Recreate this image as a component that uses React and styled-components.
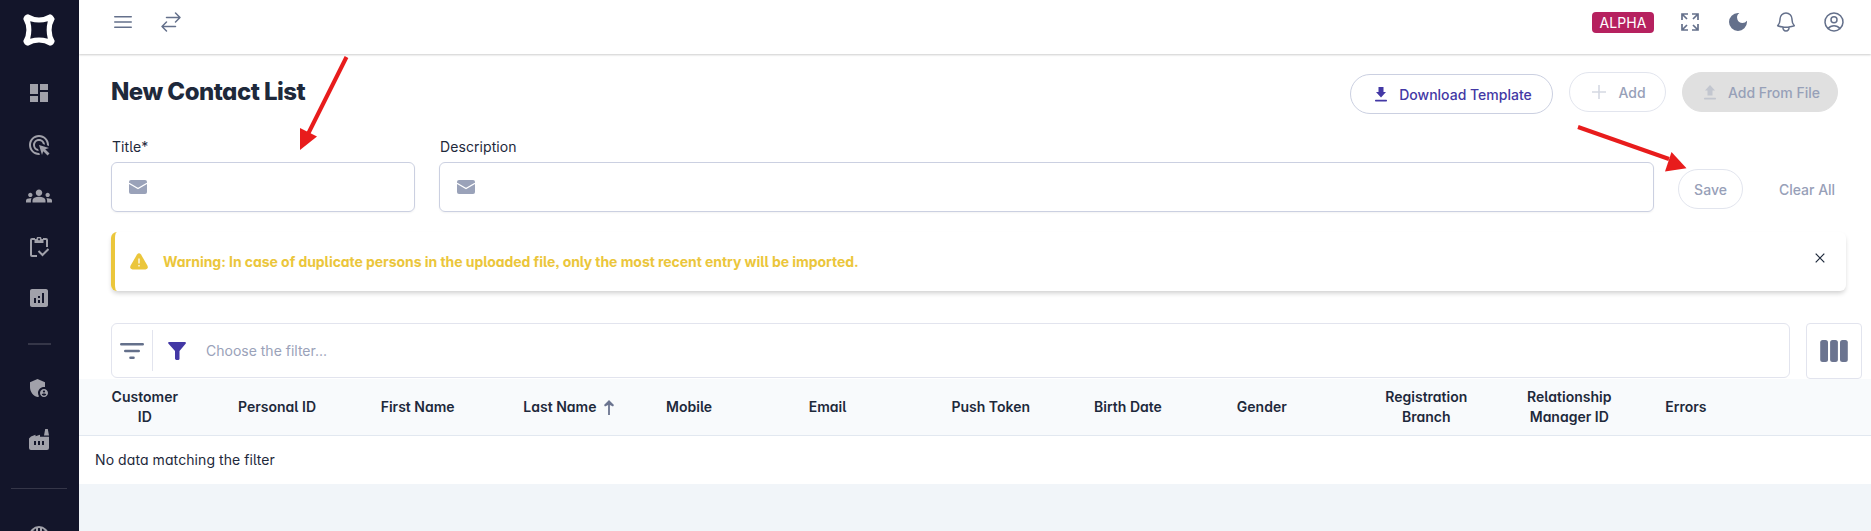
import React from 'react';
import styled, { createGlobalStyle, css } from 'styled-components';
import {
  MdDashboard, MdAdsClick, MdGroups, MdAnalytics,
  MdAdminPanelSettings, MdDarkMode,
} from 'react-icons/md';
import {
  HiOutlineBars3, HiOutlineArrowsRightLeft, HiOutlineBell, HiOutlineUserCircle,
} from 'react-icons/hi2';

const GlobalStyle = createGlobalStyle`
  * { box-sizing: border-box; }
  body {
    margin: 0;
    overflow: hidden;
    background: #f1f5f9;
    color: #1e293b;
    font-family: Inter, "Liberation Sans", sans-serif;
    font-size: 14px;
    letter-spacing: 0.08px;
    font-feature-settings: "cv11", "cv05", "ss03";
  }
  svg { display: block; flex: none; }
`;

const Shell = styled.div`
  position: relative;
  display: flex;
  width: 100%;
  height: 531px;
  overflow: hidden;
`;

const Sidebar = styled.nav`
  width: 79px;
  flex: none;
  background: #13152a;
  color: #a1a1aa;
  display: flex;
  flex-direction: column;
  align-items: center;
  overflow: hidden;
`;

const Logo = styled.div`
  padding-top: 14px;
  height: 67px;
  flex: none;
  padding-right: 1px;
`;

const NavItem = styled.div`
  height: ${(p) => p.$height || 51}px;
  flex: none;
  padding-right: 1px;
  display: flex;
  align-items: center;
  justify-content: center;
`;

const Divider = styled.div`
  flex: none;
  height: ${(p) => (p.$wide ? 1 : 2)}px;
  width: ${(p) => (p.$wide ? 56 : 23)}px;
  margin: ${(p) => p.$margin};
  background: #353648;
`;

const Main = styled.main`
  flex: 1;
  min-width: 0;
`;

const TopBar = styled.header`
  position: relative;
  height: 54px;
  padding: 0 25px 10px 32px;
  display: flex;
  align-items: center;
  background: #fff;
  color: #64708b;
  box-shadow: 0 1px 2px rgba(0, 0, 0, 0.2);
`;

const TopLeft = styled.div`
  display: flex;
  align-items: center;
  gap: 24px;
`;

const TopRight = styled(TopLeft)`
  margin-left: auto;
`;

const Badge = styled.span`
  height: 21px;
  width: 62px;
  border-radius: 4px;
  background: #b6215f;
  color: #fff;
  font-size: 14px;
  line-height: 22px;
  text-align: center;
`;

const Page = styled.section`
  height: 325px;
  padding: 18px 25px 0 32px;
  background: #fff;
`;

const PageHead = styled.div`
  display: flex;
  height: 42px;
  padding-right: 8px;
`;

const Title = styled.h1`
  margin: 0;
  font-size: 24px;
  font-weight: 800;
  line-height: 40px;
  letter-spacing: -0.53px;
`;

const Actions = styled.div`
  margin-left: auto;
  display: flex;
  align-items: flex-start;
  gap: 16px;
`;

const Button = styled.button`
  height: 40px;
  width: ${(p) => p.$width}px;
  padding: 0 0 0 ${(p) => p.$inset || 0}px;
  display: flex;
  align-items: center;
  justify-content: center;
  gap: 12px;
  border-radius: 20px;
  border: 1px solid #e2e5ee;
  background: #fff;
  color: #97a0b8;
  font: 500 14px Inter, "Liberation Sans", sans-serif;
  white-space: nowrap;
  ${(p) => p.$kind === 'primary' && css`
    margin-top: 2px;
    border-color: #cbd0e1;
    color: #4338a5;
  `}
  ${(p) => p.$kind === 'filled' && css`
    border-color: #e0e0e0;
    background: #e0e0e0;
  `}
  ${(p) => p.$kind === 'text' && css`
    border-color: transparent;
  `}
  svg { opacity: ${(p) => (p.$kind === 'primary' ? 1 : 0.4)}; }
`;

const FormRow = styled.div`
  display: flex;
  margin-top: 23px;
  align-items: flex-end;
`;

const Field = styled.label`
  width: ${(p) => p.$width}px;
  flex: none;
  margin-right: 24px;
  line-height: 20px;
`;

const FieldLabel = styled.span`
  display: block;
  padding-left: 1px;
  height: 25px;
`;

const InputBox = styled.div`
  height: 50px;
  border: 1px solid #cbd0e1;
  border-radius: 6px;
  padding: 0 17px;
  display: flex;
  align-items: center;
  color: #9aa2b9;
  box-shadow: 0 1px 2px rgba(0, 0, 0, 0.05);
`;

const FormActions = styled.div`
  display: flex;
  flex: none;
  gap: 24px;
  margin-bottom: 3px;
`;

const Warning = styled.div`
  margin-top: 20px;
  height: 59px;
  display: flex;
  align-items: center;
  padding: 0 21px 0 15px;
  gap: 15px;
  border-left: 4px solid #ebc63b;
  border-radius: 6px;
  box-shadow: 0 3px 5px -1px rgba(0, 0, 0, 0.2);
  color: #ebc63b;
  font-weight: 700;
  letter-spacing: -0.055px;
`;

const Close = styled.span`
  margin-left: auto;
  margin-bottom: 8px;
  color: #1e293b;
`;

const FilterRow = styled.div`
  display: flex;
  gap: 16px;
  margin: 32px -16px 0 0;
`;

const FilterBox = styled.div`
  flex: 1;
  height: 55px;
  border: 1px solid #e2e4ee;
  border-radius: 6px;
  display: flex;
  align-items: center;
  color: #9aa2b9;
`;

const FilterMode = styled.div`
  width: 41px;
  height: 41px;
  padding-left: 8px;
  margin-right: 15px;
  display: flex;
  align-items: center;
  border-right: 1px solid #e2e4ee;
`;

const Placeholder = styled.span`
  margin-left: 20px;
  letter-spacing: 0;
  font-feature-settings: normal;
`;

const ColumnsButton = styled.div`
  width: 56px;
  height: 56px;
  border: 1px solid #e2e4ee;
  border-radius: 4px;
  display: grid;
  place-items: center;
`;

const TableHead = styled.div`
  height: 57px;
  padding-left: 31.800px;
  display: flex;
  align-items: center;
  background: #f8fafc;
  border-bottom: 1px solid #e2e8f0;
  font-weight: 600;
  line-height: 20px;
  letter-spacing: 0.01px;
`;

const Column = styled.div`
  width: ${(p) => p.$width || 142.7}px;
  flex: none;
  display: flex;
  align-items: center;
  gap: 7px;
`;

const ColumnText = styled.span`
  width: ${(p) => (p.$wrap ? `${p.$wrap}px` : 'auto')};
  text-align: center;
  white-space: ${(p) => (p.$wrap ? 'normal' : 'nowrap')};
`;

const EmptyRow = styled.div`
  height: 48px;
  padding: 0 16px;
  line-height: 48px;
  background: #fff;
`;

const Arrow = styled.svg`
  position: absolute;
  left: ${(p) => p.$x}px;
  top: ${(p) => p.$y}px;
`;

const LogoMark = () => (
  <svg width="32" height="32" viewBox="0 0 32 32" fill="#fff" fillRule="evenodd">
    <path d="M5 .3Q16 6.500 27 .3Q30 1 31.700 5Q25.500 16 31.700 27Q31 31 27 31.700Q16 25.500 5 31.700Q1 31 .3 27Q6.500 16 .3 5Q1 1 5 .3ZM7.200 7.200Q9.500 16 7.200 24.800Q16 22 24.800 24.800Q22.500 16 24.800 7.200Q16 10 7.200 7.200Z" />
  </svg>
);

const Expand = () => (
  <svg width="24" height="24" viewBox="-2 -2 24 24" fill="none" stroke="currentColor" strokeWidth="1.700">
    <path d="M2 8V2h6M2 2l5 5M12 2h6v6M18 2l-5 5M2 12v6h6M2 18l5-5M18 12v6h-6M18 18l-5-5" />
  </svg>
);

const Mail = () => (
  <svg width="18" height="14" viewBox="0 0 18 14">
    <rect width="18" height="14" rx="2" fill="currentColor" />
    <path d="M0 3.200 9 8.600 18 3.200" fill="none" stroke="#fff" strokeWidth="1.200" />
  </svg>
);

const Transfer = ({ up }) => (
  <svg width="12" height="15" viewBox="0 0 12 15" fill="currentColor">
    <path d={up ? 'M6 0 11 5.500H8.500V10.500H3.500V5.500H1Z' : 'M3.500 0H8.500V5H11L6 10.500 1 5H3.500Z'} />
    <rect y="12.800" width="12" height="1.700" rx=".7" />
  </svg>
);

const Plus = () => (
  <svg width="14" height="14" viewBox="0 0 14 14" stroke="currentColor" strokeWidth="1.600">
    <path d="M7 0V14M0 7H14" />
  </svg>
);

const Alert = () => (
  <svg width="18" height="17" viewBox="0 0 18 17">
    <path d="M7 1.500q2-2.500 4 0L17.500 12.800q1 3.200-2 3.700h-13q-3-.5-2-3.700Z" fill="currentColor" />
    <path d="M9 5.500v5M9 12v1.500" stroke="#fff" strokeWidth="1.300" />
  </svg>
);

const Cross = () => (
  <svg width="10" height="10" viewBox="0 0 10 10" stroke="currentColor" strokeWidth="1.200">
    <path d="M.7.7 9.300 9.300M9.300.7.700 9.300" />
  </svg>
);

const FilterLines = () => (
  <svg width="24" height="18" viewBox="0 0 24 18" stroke="#64708b" strokeWidth="2.600" strokeLinecap="round">
    <path d="M1.300 2.300H22.700M5.300 9H18.700M10.500 15.700H13.500" />
  </svg>
);

const Funnel = () => (
  <svg width="18" height="18" viewBox="0 0 18 18" fill="#4338a5">
    <path d="M1 0H17q1.200.2.800 1.500L11.500 9v8q-.3 1-1.300 1H8.300q-1-.2-1.300-1.200V9L.3 1.500Q-.2.3 1 0Z" />
  </svg>
);

const ColumnsIcon = () => (
  <svg width="28" height="22" viewBox="0 0 28 22" fill="#6b7490">
    <rect x=".2" width="7.800" height="22" rx="2.500" />
    <rect x="10.100" width="7.800" height="22" rx="2.500" />
    <rect x="20" width="7.800" height="22" rx="2.500" />
  </svg>
);

const SortUp = () => (
  <svg width="10" height="15" viewBox="0 0 10 15" fill="#6b7490">
    <path d="M5 0 10 5 9 6.500 5.900 5V15H4.100V5L1 6.500 0 5Z" />
  </svg>
);

const Factory = () => (
  <svg width="20" height="21" viewBox="0 0 20 21">
    <path d="M16.200 0h2.600L20 6.500h-5ZM0 19V9.500L2 7.500l4.500-1.800v1.500L11 5.700v2h9V19q0 2-2 2H2q-2 0-2-2Z" fill="currentColor" />
    <path d="M5 12h2v4H5zM9 12h2v4H9zM13 12h2v4h-2z" fill="#13152a" />
  </svg>
);

const Globe = () => (
  <svg width="20" height="20" viewBox="0 0 20 20" fill="none" stroke="currentColor" strokeWidth="2">
    <circle cx="10" cy="10" r="9" />
    <path d="M8 1v6L3 5M12 1v6l5-2" />
  </svg>
);

const ClipboardCheck = () => (
  <svg width="20" height="20" viewBox="0 0 20 20" fill="none" stroke="currentColor" strokeWidth="2">
    <path d="M8 19H3q-1 0-1-1V3q0-1 1-1h3M14 2h3q1 0 1 1v7M9.500 14l4 4 6-6" />
    <path d="M5.500 2H7.500a2.500 2.500 0 0 1 5 0h2v4h-9ZM10 1.300a1 1 0 1 0 .1 0Z" fill="currentColor" stroke="none" fillRule="evenodd" />
  </svg>
);

const columns = [
  { label: 'Customer ID', wrap: 68, width: 127.200 },
  { label: 'Personal ID' },
  { label: 'First Name' },
  { label: 'Last Name', sorted: true },
  { label: 'Mobile' },
  { label: 'Email' },
  { label: 'Push Token' },
  { label: 'Birth Date' },
  { label: 'Gender', width: 147 },
  { label: 'Registration Branch', wrap: 85, width: 141.500 },
  { label: 'Relationship Manager ID', wrap: 88, width: 140 },
  { label: 'Errors' },
];

export default function App() {
  return (
    <Shell>
      <GlobalStyle />
      <Sidebar>
        <Logo><LogoMark /></Logo>
        <NavItem $height={52}><MdDashboard size={24} /></NavItem>
        <NavItem><MdAdsClick size={24} /></NavItem>
        <NavItem><MdGroups size={26} /></NavItem>
        <NavItem><ClipboardCheck /></NavItem>
        <NavItem><MdAnalytics size={24} /></NavItem>
        <Divider $margin="20px 1px 17px 0" />
        <NavItem $height={52}><MdAdminPanelSettings size={24} /></NavItem>
        <NavItem $height={50}><Factory /></NavItem>
        <Divider $wide $margin="24px 1px 22px 0" />
        <NavItem $height={50}><Globe /></NavItem>
      </Sidebar>
      <Main>
        <TopBar>
          <TopLeft>
            <HiOutlineBars3 size={24} />
            <HiOutlineArrowsRightLeft size={24} />
          </TopLeft>
          <TopRight>
            <Badge>ALPHA</Badge>
            <Expand />
            <MdDarkMode size={24} />
            <HiOutlineBell size={24} />
            <HiOutlineUserCircle size={24} />
          </TopRight>
        </TopBar>
        <Page>
          <PageHead>
            <Title>New Contact List</Title>
            <Actions>
              <Button $width={203} $kind="primary" $inset={4}><Transfer />Download Template</Button>
              <Button $width={97} $inset={3}><Plus />Add</Button>
              <Button $width={156} $kind="filled" $inset={4}><Transfer up />Add From File</Button>
            </Actions>
          </PageHead>
          <FormRow>
            <Field $width={304}>
              <FieldLabel>Title*</FieldLabel>
              <InputBox><Mail /></InputBox>
            </Field>
            <Field $width={1215}>
              <FieldLabel>Description</FieldLabel>
              <InputBox><Mail /></InputBox>
            </Field>
            <FormActions>
              <Button $width={65}>Save</Button>
              <Button $width={80} $kind="text">Clear All</Button>
            </FormActions>
          </FormRow>
          <Warning>
            <Alert />
            Warning: In case of duplicate persons in the uploaded file, only the most recent entry will be imported.
            <Close><Cross /></Close>
          </Warning>
          <FilterRow>
            <FilterBox>
              <FilterMode><FilterLines /></FilterMode>
              <Funnel />
              <Placeholder>Choose the filter...</Placeholder>
            </FilterBox>
            <ColumnsButton><ColumnsIcon /></ColumnsButton>
          </FilterRow>
        </Page>
        <TableHead>
          {columns.map((c) => (
            <Column key={c.label} $width={c.width}>
              <ColumnText $wrap={c.wrap}>{c.label}</ColumnText>
              {c.sorted && <SortUp />}
            </Column>
          ))}
        </TableHead>
        <EmptyRow>No data matching the filter</EmptyRow>
      </Main>
      <Arrow $x={290} $y={50} width="64" height="106">
        <path d="M56.500 7 18 84" stroke="#e81c1c" strokeWidth="4" />
        <path d="M10 100V78L27 86.500Z" fill="#e81c1c" />
      </Arrow>
      <Arrow $x={1570} $y={119} width="120" height="56">
        <path d="M8 8 99 40" stroke="#e81c1c" strokeWidth="4" />
        <path d="M101.500 33 116.500 49.300 95 52.500Z" fill="#e81c1c" />
      </Arrow>
    </Shell>
  );
}
